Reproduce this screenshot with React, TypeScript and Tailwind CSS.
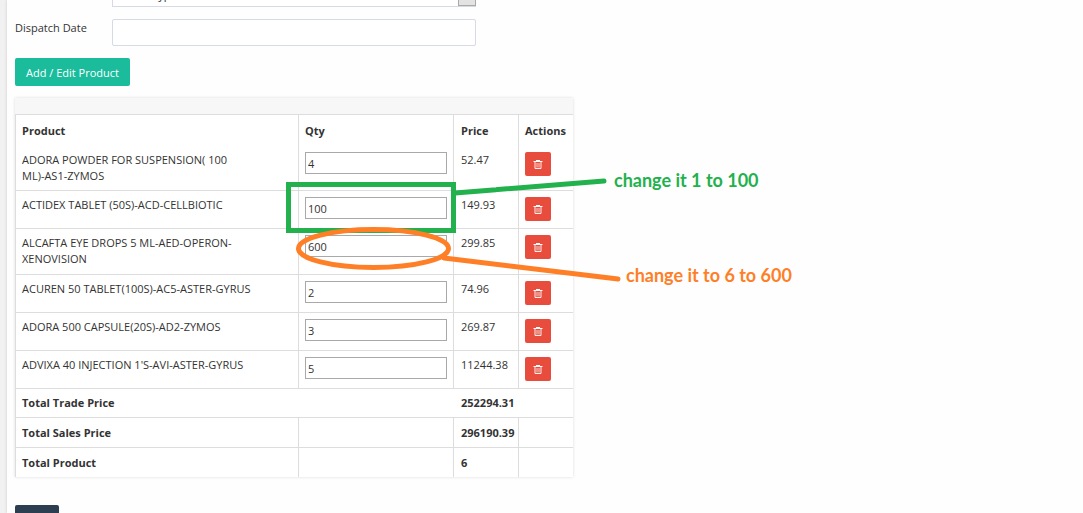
import type { ReactNode } from "react";

type Product = { name: string; qty: string; price: string };

const products: Product[] = [
  { name: "ADORA POWDER FOR SUSPENSION( 100 ML)-AS1-ZYMOS", qty: "4", price: "52.47" },
  { name: "ACTIDEX TABLET (50S)-ACD-CELLBIOTIC", qty: "100", price: "149.93" },
  { name: "ALCAFTA EYE DROPS 5 ML-AED-OPERON-XENOVISION", qty: "600", price: "299.85" },
  { name: "ACUREN 50 TABLET(100S)-AC5-ASTER-GYRUS", qty: "2", price: "74.96" },
  { name: "ADORA 500 CAPSULE(20S)-AD2-ZYMOS", qty: "3", price: "269.87" },
  { name: "ADVIXA 40 INJECTION 1'S-AVI-ASTER-GYRUS", qty: "5", price: "11244.38" },
];

function TrashIcon() {
  return (
    <svg width="10" height="10" viewBox="0 0 10 10" fill="none" stroke="white" aria-hidden="true">
      <path d="M0.5 2.5H9.5M3 1.5H7" />
      <path d="M2 2.5V9.5H8V2.5" strokeOpacity="0.9" />
      <path d="M4 4V8.5M6 4V8.5" strokeOpacity="0.75" />
    </svg>
  );
}

function Cell({ children }: { children?: ReactNode }) {
  return <td>{children}</td>;
}

function Annotations() {
  return (
    <div className="pointer-events-none absolute top-0 left-0">
      <svg width="800" height="300" fill="none" strokeWidth="5" aria-hidden="true">
        <rect x="288.5" y="184.5" width="165" height="46" stroke="#22b14c" />
        <path d="M455 193L604 181" stroke="#22b14c" strokeLinecap="round" />
        <ellipse cx="373.5" cy="248.5" rx="75" ry="19" stroke="#ff7f27" />
        <path d="M444 258L618 279" stroke="#ff7f27" strokeLinecap="round" />
      </svg>
      <p className="absolute top-[169px] left-[614px] font-['Lato',sans-serif] text-lg leading-[22px] font-bold whitespace-nowrap text-[#22b14c]">
        change it 1 to 100
      </p>
      <p className="absolute top-[264px] left-[626px] font-['Lato',sans-serif] text-lg leading-[22px] font-bold whitespace-nowrap text-[#ff7f27]">
        change it to 6 to 600
      </p>
    </div>
  );
}

export default function App() {
  return (
    <div className="relative flex min-h-screen overflow-hidden bg-[#f1f1f1] pl-[7px] font-['Open_Sans',sans-serif] text-[11px] leading-4 text-[#333333]">
      <main className="flex flex-1 flex-col items-start bg-[#fefefe] pl-2 shadow-[0_0_3px_#cccccc]">
        <div className="flex h-[7px] items-end overflow-hidden pl-[97px]">
          <div className="relative">
            <select
              aria-label="Type"
              className="block h-[27px] w-[364px] appearance-none border border-[#d5dae4] bg-white px-1.5 pt-0.5 text-[11px]"
            >
              <option>Select Type</option>
            </select>
            <span className="pointer-events-none absolute right-0 bottom-px h-[25px] w-[18px] border border-[#a9a9a9] bg-[#e3e3e3]" />
          </div>
        </div>

        <div className="mt-3 flex">
          <label htmlFor="dispatch" className="w-[97px] pt-px">
            Dispatch Date
          </label>
          <input id="dispatch" className="h-[27px] w-[364px] rounded-xs border border-[#d5dae4] bg-white px-1.5" />
        </div>

        <button className="mt-3 h-7 rounded-xs bg-[#1abc9c] px-[11px] pt-0.5 text-white">Add / Edit Product</button>

        <section className="mt-3 w-[558px] shadow-[0_0_3px_#dddddd]">
          <div className="h-4 bg-[#f7f7f7]" />
          <table className="w-full table-fixed border-separate border-spacing-0 border-t border-l border-[#dddddd] bg-white text-left [&_td]:align-top">
            <colgroup>
              <col className="w-[283px]" />
              <col className="w-[155px]" />
              <col className="w-[65px]" />
              <col />
            </colgroup>
            <thead>
              <tr className="[&>th]:border-[#dddddd] [&>th]:px-1.5 [&>th]:pt-2 [&>th]:pb-1.5 [&>th:not(:last-child)]:border-r [&>th:nth-child(3)]:pl-[7px]">
                <th>Product</th>
                <th>Qty</th>
                <th>Price</th>
                <th>Actions</th>
              </tr>
            </thead>
            <tbody className="[&>tr>td]:border-[#dddddd] [&>tr>td]:px-1.5 [&>tr>td]:pt-1.5 [&>tr>td]:pb-[7px] [&>tr>td:not(:last-child)]:border-r [&>tr>td:nth-child(3)]:pr-0 [&>tr>td:nth-child(3)]:pl-[7px] [&>tr:first-child>td]:pt-[7px] [&>tr:first-child>td]:pb-1.5 [&>tr:not(:first-child)>td]:border-t">
              {products.map((p) => (
                <tr key={p.name}>
                  <Cell>
                    <div className="max-w-[229px]">{p.name}</div>
                  </Cell>
                  <Cell>
                    <input
                      aria-label={`Quantity of ${p.name}`}
                      defaultValue={p.qty}
                      className="block h-[22px] w-[142px] border border-[#a9a9a9] bg-white px-0.5"
                    />
                  </Cell>
                  <Cell>{p.price}</Cell>
                  <Cell>
                    <button
                      aria-label={`Delete ${p.name}`}
                      className="flex h-6 w-[26px] items-center justify-center rounded-xs bg-[#e74c3c]"
                    >
                      <TrashIcon />
                    </button>
                  </Cell>
                </tr>
              ))}
            </tbody>
            <tfoot className="font-bold [&>tr>td]:border-t [&>tr>td]:border-[#dddddd] [&>tr>td]:px-1.5 [&>tr>td]:pt-[7px] [&>tr>td]:pb-1.5 [&>tr:first-child>td]:py-1.5 [&>tr:first-child>td:last-child]:pl-[7px] [&>tr:not(:first-child)>td:not(:last-child)]:border-r [&>tr>td:nth-child(3)]:pr-0 [&>tr>td:nth-child(3)]:pl-[7px]">
              <tr>
                <td colSpan={2}>Total Trade Price</td>
                <td colSpan={2}>252294.31</td>
              </tr>
              <tr>
                <Cell>Total Sales Price</Cell>
                <Cell />
                <Cell>296190.39</Cell>
                <Cell />
              </tr>
              <tr>
                <Cell>Total Product</Cell>
                <Cell />
                <Cell>6</Cell>
                <Cell />
              </tr>
            </tfoot>
          </table>
        </section>

        <div className="mt-7 h-2 overflow-hidden">
          <button aria-label="Save" className="h-7 w-11 rounded-xs bg-[#2c3e50]" />
        </div>
      </main>
      <Annotations />
    </div>
  );
}
